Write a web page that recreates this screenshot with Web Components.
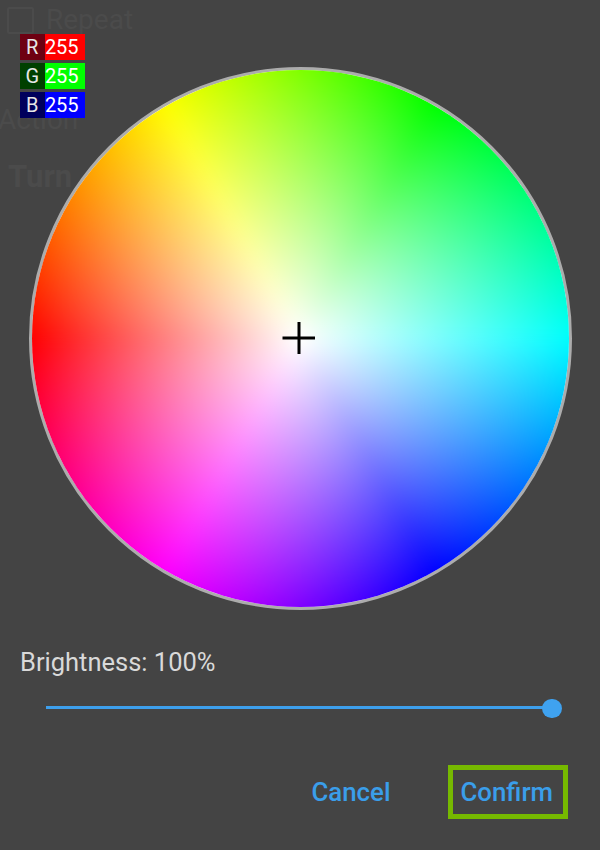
<!DOCTYPE html>
<html><head><meta charset="utf-8">
<style>
html,body{margin:0;padding:0;background:#444444;}
body{width:600px;height:850px;overflow:hidden;font-family:Roboto,"Liberation Sans",sans-serif;}
</style></head>
<body>
<template id="t-backdrop">
<style>
:host{display:block;position:absolute;inset:0;color:#4b4b4b;font-family:Roboto,sans-serif;overflow:hidden}
.wrap{display:flex;flex-direction:column;align-items:flex-start;padding:6px 0 0 7px}
.rep{display:flex;align-items:center;gap:12px;font-size:28px;line-height:28px}
.box{width:23px;height:23px;border:2px solid #4b4b4b;border-radius:2px;box-sizing:content-box}
.act{font-size:28px;line-height:30px;margin:71px 0 0 -9px}
.turn{font-size:31px;line-height:30px;font-weight:700;margin:27px 0 0 1px}
</style>
<div class="wrap"><div class="rep"><span class="box"></span><span>Repeat</span></div>
<div class="act">Action</div><div class="turn">Turn</div></div>
</template>

<template id="t-badge">
<style>
:host{display:flex;width:65px;height:26px;font-size:20px;line-height:26px;color:#f2f2f2;font-family:Roboto,sans-serif}
.k{width:24.5px;text-align:center;background:var(--dark);color:#e6e6e6}
.v{flex:1;text-align:center;background:var(--bright);color:#fff;padding-right:6px}
</style>
<div class="k"><slot name="k"></slot></div><div class="v"><slot name="v"></slot></div>
</template>

<template id="t-wheel">
<style>
:host{display:block;position:relative;width:543px;height:543px}
.disc{position:relative;width:100%;height:100%;box-sizing:border-box;border-radius:50%;border:3px solid #acacac;overflow:hidden;background:#fff}
.hue{position:absolute;inset:-40px;filter:blur(9px);
background:conic-gradient(from 0deg,#7fff00 0deg,#00ff00 30deg,#00ffff 90deg,#0000ff 150deg,#ff00ff 210deg,#ff0000 270deg,#ffff00 330deg,#7fff00 360deg)}
.sat{position:absolute;inset:0;border-radius:50%;background:radial-gradient(closest-side,#fff 0%,rgba(255,255,255,0) 100%)}
svg{position:absolute;left:253.8px;top:254px;width:34px;height:34px}
</style>
<div class="disc"><div class="hue"></div><div class="sat"></div></div>
<svg viewBox="0 0 34 34"><path d="M17 1V33M0.5 17H33" stroke="#000" stroke-width="3" fill="none"/></svg>
</template>

<template id="t-slider">
<style>
:host{display:block;position:relative;height:22px;margin:0 48px 0 46px}
.track{position:absolute;left:0;right:0;top:9px;height:3px;background:#3d9fec}
.thumb{position:absolute;right:-9.6px;top:1.7px;width:19.2px;height:19.2px;border-radius:50%;background:#3fa2f0}
</style>
<div class="track"></div><div class="thumb"></div>
</template>

<template id="t-btn">
<style>
:host{display:inline-flex;align-items:center;justify-content:center;box-sizing:border-box;height:54px;padding:0 10px 0 7px;color:#3a9eea;font:500 25.8px Roboto,sans-serif;border:5px solid transparent}
:host([focused]){border-color:#76b900}
</style>
<slot></slot>
</template>

<template id="t-dialog">
<style>
:host{display:block;position:relative;width:600px;height:850px;font-family:Roboto,sans-serif}
.col{position:relative;display:flex;flex-direction:column;padding-top:67px;height:100%;box-sizing:border-box}
.rgb{position:absolute;left:20px;top:33.5px;display:flex;flex-direction:column;gap:3px}
.label{margin:38px 0 0 20px;font-size:25.5px;font-weight:400;line-height:28px;color:#d9d9d9}
.sl{margin-top:21px}
.btns{display:flex;justify-content:flex-end;align-items:center;gap:43px;margin:46px 32px 0 0}
</style>
<div class="col">
  <slot name="wheel"></slot>
  <div class="rgb"><slot name="rgb"></slot></div>
  <div class="label"><slot name="label"></slot></div>
  <div class="sl"><slot name="slider"></slot></div>
  <div class="btns"><slot name="btns"></slot></div>
</div>
</template>

<x-backdrop></x-backdrop>
<x-dialog>
  <x-wheel slot="wheel" style="margin:0 auto"></x-wheel>
  <x-badge slot="rgb" style="--dark:#6e0012;--bright:#ff0000"><span slot="k">R</span><span slot="v">255</span></x-badge>
  <x-badge slot="rgb" style="--dark:#004000;--bright:#00ff00"><span slot="k">G</span><span slot="v">255</span></x-badge>
  <x-badge slot="rgb" style="--dark:#00005c;--bright:#0000ff"><span slot="k">B</span><span slot="v">255</span></x-badge>
  <span slot="label">Brightness: 100%</span>
  <x-slider slot="slider"></x-slider>
  <x-btn slot="btns">Cancel</x-btn>
  <x-btn slot="btns" focused>Confirm</x-btn>
</x-dialog>
<script>
for (const [tag,id] of [['x-backdrop','t-backdrop'],['x-badge','t-badge'],['x-wheel','t-wheel'],['x-slider','t-slider'],['x-btn','t-btn'],['x-dialog','t-dialog']]) {
  customElements.define(tag, class extends HTMLElement {
    constructor(){super();this.attachShadow({mode:'open'}).appendChild(document.getElementById(id).content.cloneNode(true));}
  });
}
</script>
</body></html>
